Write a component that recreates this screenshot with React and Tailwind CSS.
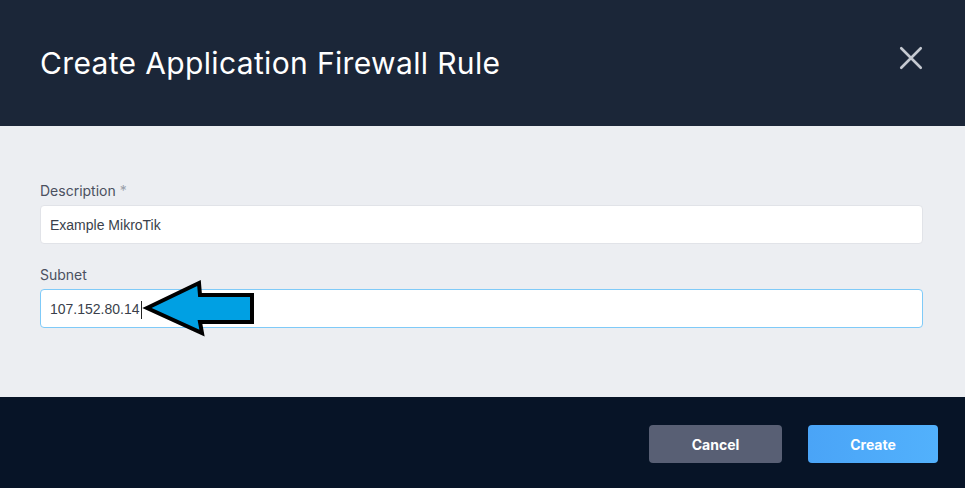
import React from 'react';

const App = () => {
  return (
    <div className="w-[965px] h-[488px] flex flex-col bg-[#eceef2] font-['Inter',sans-serif]">
      <div className="h-[126px] bg-[#1b2638] flex items-start justify-between pl-10 pr-10 pt-[43px]">
        <h1 className="text-[30px] text-white tracking-[0.35px] leading-[40px]">Create Application Firewall Rule</h1>
        <svg width="26" height="26" viewBox="0 0 24 24" className="mt-[2px] mr-[1px] text-[#c5c9d1]" fill="none" stroke="currentColor" strokeWidth="2.4" strokeLinecap="round">
          <path d="M3 3 L21 21 M21 3 L3 21" />
        </svg>
      </div>

      <div className="flex-1 pl-10 pr-[42px] pt-[56px] relative">
        <label className="block text-[14px] text-[#4a5060] mb-[5px] leading-[18px]">
          Description <span className="text-[#9aa0ab]">*</span>
        </label>
        <div className="h-[39px] bg-white border border-[#e1e3e8] rounded-[4px] flex items-center pl-[9px] pt-[2px] text-[14px] text-[#3a3f4b] font-['Liberation_Sans',sans-serif]">
          Example MikroTik
        </div>

        <label className="block text-[14px] text-[#4a5060] mt-[22px] mb-[5px] leading-[18px]">Subnet</label>
        <div className="h-[39px] bg-white border border-[#7fcaf8] rounded-[4px] flex items-center pl-[9px] pt-[2px] text-[14px] text-[#3a3f4b] font-['Liberation_Sans',sans-serif]">
          107.152.80.14<span className="inline-block w-px h-[18px] bg-[#222] ml-px" />
        </div>

        <svg className="absolute left-[140px] top-[152px]" width="120" height="62" viewBox="0 0 120 62">
          <polygon
            points="7,30 59,5 60,17 112,17 112,44 60,44 62,55"
            fill="#00a0e3"
            stroke="#000"
            strokeWidth="4"
            strokeLinejoin="miter"
          />
        </svg>
      </div>

      <div className="h-[91px] bg-[#071427] flex items-center justify-end gap-[26px] pr-[27px] pt-[3px]">
        <button className="w-[133px] h-[38px] rounded-[4px] bg-[#585f74] text-white text-[14px] font-bold">Cancel</button>
        <button className="w-[130px] h-[38px] rounded-[4px] bg-gradient-to-r from-[#4aa4f7] to-[#52b1fc] text-white text-[14px] font-bold">Create</button>
      </div>
    </div>
  );
};

export default App;
